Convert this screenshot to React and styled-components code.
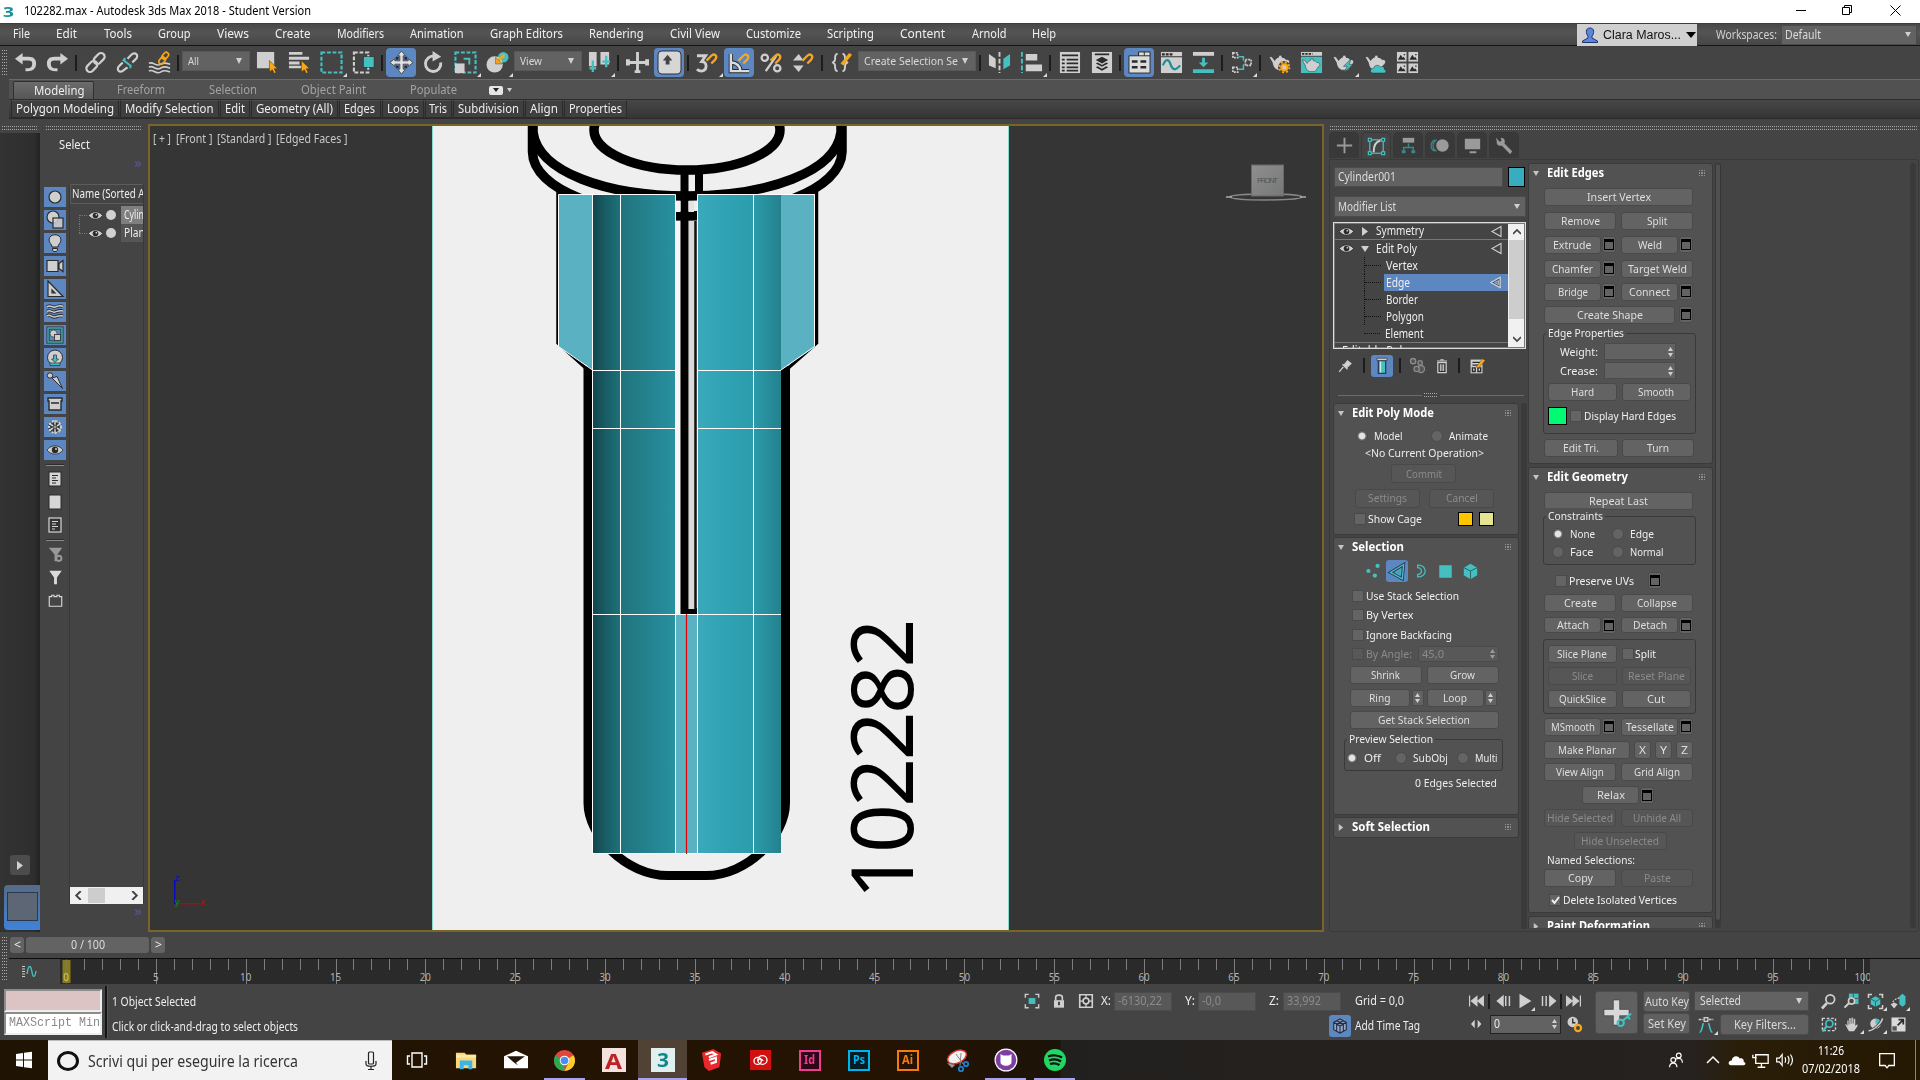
import React from "react";
import styled, { createGlobalStyle, css } from "styled-components";

const L = "#cfcfcf";
const K = "#2b2b2b";
const C = "#45c0c0";
const O = "#f7a71b";
const BLUE = "#5d87c1";
const UI = '"Noto Sans", "Open Sans", sans-serif';

const Global = createGlobalStyle`
  *{box-sizing:border-box}
  html,body{margin:0;padding:0;background:#444;overflow:hidden}
  body{font-family:${UI};font-size:12px;color:#eee}
  svg{display:block;flex:none}
`;

/* ---------- text ---------- */
const ctx = document.createElement("canvas").getContext("2d");
const TextBox = styled.span`
  display:block; flex:none; height:16px; line-height:16px; white-space:nowrap;
`;
const Ink = styled.span`
  display:block; width:max-content; transform-origin:0 50%;
  font-family:${(p) => p.$f}; font-size:${(p) => p.$s}px; font-weight:${(p) => (p.$b ? 700 : 400)};
  color:${(p) => p.$c};
`;
function T({ children, w, s = 12, c = "#ededed", b, f = UI, k = 0.86 }) {
  ctx.font = `${b ? 700 : 400} ${s}px ${f}`;
  const natural = ctx.measureText(children).width;
  const width = w || natural * k;
  return (
    <TextBox style={{ width }}>
      <Ink $s={s} $c={c} $b={b} $f={f} style={{ transform: `scaleX(${width / natural})` }}>{children}</Ink>
    </TextBox>
  );
}

/* ---------- icons ---------- */
const teapot = (
  <path d="M1 6 L4 6 L7 10 C8 8 9.500 7 11 6.500 L11.500 4.500 H14.500 V6.500 C17 7 18.500 8 19 9 C23 8 24 13 20 15 C19 17 18 19 16 20 H10 C7 19 5 16 4.500 12 Z" fill={L} stroke={K} strokeWidth=".6" />
);
const hook = <path d="M11 10 L16 5 C19 2 23 5 20 9 L16 13" fill="none" stroke={O} strokeWidth="2.4" />;
const cursor = <path d="M14 10 V22 L17 19.5 L19 23.5 L21 22.5 L19 18.5 H22.5Z" fill={O} stroke={K} strokeWidth=".5" />;
const people = (
  <g fill="none" stroke="#fff" strokeWidth="1.3"><circle cx="9" cy="12" r="2.6" /><circle cx="15" cy="7" r="2.6" /><path d="M5 20 C5 14 13 14 13 20 M12 11 C16 9 19 11 19 15" /></g>
);
const ICONS = {
  undo: <path d="M1 8 L9 2 V6 H15 C21 6 23 9 23 13 C23 18 20 21 14 21 H12 V18 H14 C18 18 19 16 19 13 C19 11 18 10 15 10 H9 V14Z" fill={L} />,
  redo: <path d="M23 8 L15 2 V6 H9 C3 6 1 9 1 13 C1 18 4 21 10 21 H12 V18 H10 C6 18 5 16 5 13 C5 11 6 10 9 10 H15 V14Z" fill={L} />,
  link: <g fill="none" stroke={L} strokeWidth="2.3"><rect x="9.5" y="4" width="13" height="7.5" rx="3.7" transform="rotate(-45 16 8)" /><rect x="1.5" y="12.5" width="13" height="7.5" rx="3.7" transform="rotate(-45 8 16)" /></g>,
  unlink: <g fill="none" strokeWidth="2.3"><path d="M12 8 L16 4 C20 0 25 5 20 9 L17 12 M12 17 L8 20 C4 24 -1 19 4 15 L7 12" stroke={L} /><path d="M7 9 L16 16 M9 7 V10 M15 18 V15" stroke={C} strokeWidth="2" /></g>,
  bind: <g fill="none"><path d="M1 13 C5 10 8 17 13 14 S20 13 23 14 M1 17 C5 14 8 21 13 18 S20 17 23 18 M1 21 C5 18 8 25 13 22 S20 21 23 22" stroke={L} strokeWidth="1.7" /><g stroke={O} strokeWidth="1.700"><rect x="14" y="2.500" width="8" height="5" rx="2.500" transform="rotate(-50 18 5)" /><rect x="10.500" y="8" width="8" height="5" rx="2.500" transform="rotate(-50 14 10)" /></g></g>,
  select: <><rect x="1" y="1" width="18" height="17" fill={L} />{cursor}</>,
  byname: <><path d="M1 1H15V4H1Z M1 6H22V9H1Z M1 11H12V14H1Z M1 15.500H20V18H1Z" fill={L} />{cursor}</>,
  rectsel: <rect x="1.500" y="1.500" width="21" height="21" fill="none" stroke={C} strokeWidth="2.200" strokeDasharray="4 1.800" />,
  crossing: <><rect x="2" y="1.500" width="15" height="21" fill="none" stroke={L} strokeWidth="2.200" strokeDasharray="4 1.800" /><rect x="12" y="6" width="11" height="11" fill={C} stroke={K} strokeWidth=".6" /></>,
  move: <><path d="M12 0 L16 5 H13.700 V10.300 H19 V8 L24 12 L19 16 V13.700 H13.700 V19 H16 L12 24 L8 19 H10.300 V13.700 H5 V16 L0 12 L5 8 V10.300 H10.300 V5 H8Z" fill="#e0e0e0" stroke={K} strokeWidth=".7" /><path d="M6 6h3v3h-3z M15 6h3v3h-3z M6 15h3v3h-3z M15 15h3v3h-3z" fill={K} /></>,
  rotate: <><path d="M19.500 12 A8 8 0 1 1 13 5.500" fill="none" stroke={L} strokeWidth="3" /><path d="M11 0 L20 6 L11 11Z" fill={L} /></>,
  scale: <><rect x="1.500" y="1.500" width="21" height="21" fill="none" stroke={C} strokeWidth="2.200" strokeDasharray="4 1.800" /><rect x="1" y="13" width="10" height="10" fill={L} /><path d="M10 8 H16 V14" fill="none" stroke={C} strokeWidth="2" /></>,
  place: <><circle cx="18" cy="6.500" r="5.500" fill={C} /><circle cx="9" cy="14" r="8.500" fill={L} /><path d="M19 4 L13 10" stroke={O} strokeWidth="3" /><path d="M10 6.500 V13.500 H17Z" fill={O} stroke={K} strokeWidth=".4" /></>,
  pivot: <><path d="M1 1H9V16H1Z M13 1H22V14H13Z" fill={L} /><path d="M5 10V22M1.500 18H8.500 M19 5V17M15 11H23" stroke={C} strokeWidth="2.400" /></>,
  manip: <path d="M10.500 1H13.500V10.500H20V8.500H24V15H20V13.500H13.500V20H15V23H9V20H10.500V13.500H4V15H0V8.500H4V10.500H10.500Z" fill={L} />,
  kbd: <><rect x="0" y="0" width="24" height="24" rx="4" fill="#d6d6d6" stroke={K} /><path d="M10 4 L15 10 H12V14H8V10H5Z" fill="#444" /></>,
  snap3: <><path d="M1 5 H10 L6 11 C12 11 12 20 6 21 C3 21 2 20 1 19" fill="none" stroke={L} strokeWidth="3" />{hook}</>,
  angle: <><path d="M3 3V21H22 M3 12 C9 12 13 16 13 21" fill="none" stroke={K} strokeWidth="4.500" /><path d="M3 3V21H22 M3 12 C9 12 13 16 13 21" fill="none" stroke="#dcdcdc" strokeWidth="2.600" />{hook}</>,
  pct: <><g fill="none" stroke={L} strokeWidth="2.400"><circle cx="5" cy="7" r="3.300" /><circle cx="18" cy="18" r="3.300" /><path d="M17 5 L6 21" /></g>{hook}</>,
  spin: <><path d="M7 3 L12 10H1Z M7 22 L12 15H1Z" fill={L} />{hook}</>,
  named: <><path d="M8 3 C4 3 6 8 5 10 L3 12 L5 14 C6 16 4 21 8 21 M13 3 C17 3 15 8 16 10 L18 12 L16 14 C15 16 17 21 13 21" fill="none" stroke={L} strokeWidth="2" /><path d="M11 13 L20 2 L23 4 L14 15Z" fill={O} /></>,
  mirror: <><path d="M1 3 L8 8 V18 L1 15Z" fill={L} /><path d="M23 3 L16 8 V19 L23 15Z" fill={C} /><path d="M12 1V23" stroke={L} strokeWidth="2" strokeDasharray="5 2" /></>,
  align: <><path d="M2 1V23" stroke={C} strokeWidth="2" strokeDasharray="5 2" /><path d="M6 3H18V10H6Z M6 14H23V21H6Z" fill={L} /></>,
  list: <><path d="M2 1H23V23H2Z" fill={L} /><path d="M4 4.500H21 M4 9H7M9 9H21 M4 13H7M9 13H21 M4 17H7M9 17H21 M4 20.500H7M9 20.500H21" stroke={K} strokeWidth="1.800" /></>,
  layers: <><path d="M2 1H23V23H2Z" fill={L} /><path d="M5 3.500H20" stroke={K} strokeWidth="1.800" /><path d="M12.500 6L19 9.500L12.500 13L6 9.500Z M6 13L12.500 16.500L19 13L17 12L12.500 14.500L8 12Z M6 17L12.500 20.500L19 17L17 16L12.500 18.500L8 16Z" fill={K} /></>,
  ribbon: <><path d="M1 5H11V1H23V23H1Z" fill="#dcdcdc" stroke={K} /><path d="M11 1V5H23M17 1V5" fill="none" stroke={K} /><path d="M4 11H10M13 11H19M4 17H10M13 17H19" stroke={K} strokeWidth="2.600" /></>,
  curve: <><path d="M1 1H23V23H1Z" fill={L} /><path d="M2 3.500H13" stroke={K} strokeWidth="2.500" strokeDasharray="3 1" /><path d="M1 6H23" stroke={K} /><path d="M3 15 C6 8 9 8 11 14 S16 21 21 15" fill="none" stroke="#238f94" strokeWidth="2.400" /></>,
  dope: <><path d="M1 1H23V5H1Z" fill={L} /><path d="M10.500 7H13.500V12H17L12 17L7 12H10.500Z M1 19H23V23H1Z" fill={C} /></>,
  schematic: <><g fill="#444" stroke={L} strokeWidth="1.800" strokeDasharray="2 1"><rect x="3" y="2" width="5" height="5" /><rect x="3" y="17" width="5" height="5" /><rect x="16" y="9" width="6" height="6" /></g><path d="M9 6H14V10M9 19H14V14" fill="none" stroke={C} strokeWidth="1.600" /></>,
  rsetup: <>{teapot}<circle cx="17" cy="17" r="6.500" fill="#444" /><circle cx="17" cy="17" r="3.200" fill={L} stroke={O} strokeWidth="2.200" /><circle cx="17" cy="17" r="5.300" fill="none" stroke={O} strokeWidth="2" strokeDasharray="2.100 2.060" /></>,
  rwindow: <><path d="M1 1H23V5H1Z" fill={L} /><path d="M2 3H13" stroke={K} strokeWidth="2" strokeDasharray="2.500 1" /><path d="M1 6H23V23H1Z" fill={C} /><g transform="translate(1.500 4.500) scale(.85)">{teapot}</g></>,
  rbolt: <>{teapot}<path d="M20 8 L12 16 H16 L12 23 L22 14 H18Z" fill={C} stroke={K} strokeWidth=".5" /></>,
  rcloud: <>{teapot}<path d="M9 23 C6 23 6 18 10 18 C11 14 16 14 17 17 C19 15 22 17 21 19 C24 20 23 23 21 23Z" fill={C} stroke={K} strokeWidth=".5" /></>,
  rgrid: <g fill={L}>{[[1, 1], [13, 1], [1, 13], [13, 13]].map(([x, y]) => <g key={x + "-" + y} transform={`translate(${x} ${y})`}><rect width="10" height="10" /><path d="M1 8 L4 3 L6 6 L7 5 L9 8Z M7 2h1.500v1.500h-1.500z" fill={K} /></g>)}</g>,
  /* explorer */
  geo: <circle cx="12" cy="12" r="6" fill={L} stroke={K} strokeWidth="1.200" />,
  shape: <><circle cx="10" cy="9" r="6" fill={L} stroke={K} strokeWidth="1.200" /><rect x="10" y="10" width="10" height="10" fill={L} fillOpacity=".85" stroke={K} strokeWidth="1.200" /></>,
  light: <path d="M9 16 C9 13 6 12 6 9 C6 2 18 2 18 9 C18 12 15 13 15 16Z M9.500 17.500H14.500V19L13.500 20.500H10.500L9.500 19Z" fill={L} stroke={K} />,
  camera: <path d="M4 6.500H15V17.500H4Z M16 9.500L20 6.500V17.500L16 14.500Z" fill={L} stroke={K} strokeWidth="1.200" />,
  helper: <path d="M5 4 L20 19.500 H5Z M9 13V16H12Z" fillRule="evenodd" fill={L} stroke={K} strokeWidth="1.200" />,
  wave: <g fill="none"><path d="M4 7 C7 4 9 8 12 7 S17 5 20 6.500 M4 11.500 C7 9 9 13 12 12 S17 10 20 11 M4 16 C7 13 9 18 12 17 S17 15 20 16" stroke={K} strokeWidth="3.200" /><path d="M4 7 C7 4 9 8 12 7 S17 5 20 6.500 M4 11.500 C7 9 9 13 12 12 S17 10 20 11 M4 16 C7 13 9 18 12 17 S17 15 20 16" stroke={L} strokeWidth="1.500" /></g>,
  group: <><rect x="5" y="5" width="14" height="14" fill={BLUE} stroke={K} strokeWidth="3" /><rect x="5" y="5" width="14" height="14" fill="none" stroke={C} strokeWidth="1.300" /><circle cx="10.500" cy="10.500" r="3.500" fill={L} stroke={K} strokeWidth=".6" /><rect x="11.500" y="11.500" width="6" height="6" fill={L} stroke={K} strokeWidth=".8" /></>,
  xref: <><circle cx="12" cy="11.500" r="7.500" fill={L} stroke={K} /><path d="M10.500 9H13.500V13H15.500L12 16.500L8.500 13H10.500Z M7 17H17V19.500H7Z" fill={C} stroke={K} strokeWidth=".7" /></>,
  bone: <><path d="M9 9 L14 7.500 L19.500 19.500Z" fill={L} stroke={K} /><circle cx="7" cy="6.500" r="2.700" fill={L} stroke={K} /></>,
  box: <path d="M5 6H19V9H18V18H6V9H5Z M8 11H16" fill={L} stroke={K} strokeWidth="1.400" />,
  frozen: <g stroke={K} fill="none"><path d="M12 5V19M6 8.500L18 15.500M6 15.500L18 8.500" strokeWidth="3.800" /><path d="M12 5V19M6 8.500L18 15.500M6 15.500L18 8.500" stroke={L} strokeWidth="1.600" /><circle cx="12" cy="12" r="6" stroke={L} strokeDasharray="2 1.500" strokeWidth="2" /><circle cx="12" cy="12" r="2" fill="#999" stroke={K} strokeWidth=".8" /></g>,
  eye: <><path d="M4 12 C8 6.500 16 6.500 20 12 C16 17.500 8 17.500 4 12Z" fill={L} stroke={K} strokeWidth=".8" /><circle cx="12" cy="12" r="3.200" fill={K} /><circle cx="13" cy="11" r="1" fill={L} /></>,
  doc1: <><rect x="6" y="5" width="12" height="14" fill="#d6d6d6" stroke={K} /><path d="M9 8.500H15M9 11H13M9 13.500H15M9 16H13" stroke={K} /></>,
  doc2: <rect x="6" y="5" width="12" height="14" fill="#d6d6d6" stroke={K} />,
  doc3: <><rect x="6" y="5" width="12" height="14" fill="#333" stroke="#d6d6d6" strokeWidth="1.200" /><path d="M9 8.500H15M9 11H13M9 13.500H15M9 16H12" stroke="#d6d6d6" /></>,
  filt1: <><path d="M5 5H19L14 12V19H11V12Z" fill="#999" /><circle cx="15.500" cy="16" r="2.700" fill="#444" stroke="#999" strokeWidth="2" /></>,
  filt2: <path d="M5.500 5H18.500L13.500 12V19H10.500V12Z" fill="#dadada" />,
  brick: <path d="M5.500 18V8H8V6.500H10.500V8H13.500V6.500H16V8H18.500V18Z" fill="none" stroke="#d6d6d6" strokeWidth="1.200" />,
  /* command panel */
  plus: <path d="M12 4V20M4 12H20" stroke="#9a9a9a" strokeWidth="2" />,
  modify: <><rect x="5" y="5" width="14" height="14" fill="none" stroke={C} strokeWidth="1.300" /><g fill="#333" stroke={C} strokeWidth="1.300"><rect x="3.500" y="3.500" width="3" height="3" /><rect x="17.500" y="3.500" width="3" height="3" /><rect x="3.500" y="17.500" width="3" height="3" /><rect x="17.500" y="17.500" width="3" height="3" /></g><path d="M9 18 C9 11 11 7 16 6" fill="none" stroke={L} strokeWidth="2" /></>,
  hier: <><path d="M6 4H18V9H6Z" fill="#9a9a9a" /><path d="M12 10V14M7 17V14H17V17" fill="none" stroke="#38898b" strokeWidth="1.500" /><path d="M5 17H9V20H5Z M15 17H19V20H15Z" fill="#38898b" /></>,
  motion: <><path d="M8 6 C3 9 3 16 8 18 M6 6 C1 9 1 16 6 18" fill="none" stroke="#38898b" strokeWidth="1.300" /><circle cx="14" cy="12" r="6.500" fill="#9a9a9a" /></>,
  display: <path d="M4 5H20V16H4Z M9 18H16V20H9Z" fill="#9a9a9a" />,
  util: <path d="M3 4 L7 8 L9 7 L8 4 C12 4 13 7 12 10 L20 18 L18 21 L9 12 C6 13 3 10 4 8Z" fill="#9a9a9a" />,
  pin: <path d="M5 19 L10 13 M9 10 L15 16 M11 11 L15 6 L19 9 L14 14Z" stroke={L} fill={L} strokeWidth="1.600" />,
  tube: <><path d="M8 6H16V20H8Z" fill={C} stroke="#2d3c50" strokeWidth="1.400" /><path d="M10.500 7V19" stroke="#d6efef" strokeWidth="1.200" /><path d="M6.500 3.500H17.500V6H6.500Z" fill={L} stroke="#2d3c50" strokeWidth=".8" /></>,
  unique: <g fill="#555" stroke="#8b8b8b" strokeWidth="1.500"><circle cx="7" cy="7" r="3" /><circle cx="15" cy="9" r="2.500" /><circle cx="16" cy="16" r="4" /><circle cx="11" cy="16" r="3" /></g>,
  trash: <><path d="M7 8H17V20H7Z" fill={K} stroke={L} strokeWidth="1.500" /><path d="M6 6H18M10 4.500H14M10 10V18M12 10V18M14 10V18" stroke={L} strokeWidth="1.300" /></>,
  config: <><path d="M5 5H18V20H5Z" fill={L} /><path d="M7 8H16M7 11H16M7 14h3v4h-3z M13 14h3v4h-3z" fill="none" stroke={K} strokeWidth="1.500" /><path d="M11 13 L18 4 L21 6 L14 14Z" fill={O} stroke={K} strokeWidth=".4" /></>,
  svert: <g fill={C}><circle cx="7" cy="12" r="2.300" /><circle cx="17" cy="6.500" r="2.300" /><circle cx="14" cy="17" r="2.300" /></g>,
  sedge: <g fill="none"><path d="M19 4 L4 13 L17.500 20.500Z" stroke="#24324a" strokeWidth="3.400" /><path d="M19 4 L4 13 L17.500 20.500Z" stroke={C} strokeWidth="1.600" /><path d="M15.500 9.800 L10 13 L15 15.800Z" stroke={C} strokeWidth="1" /></g>,
  sborder: <path d="M8 5 C20 4 20 20 8 19 V16 C15 16 13 8 8 8Z" fill="none" stroke={C} strokeWidth="1.500" />,
  spoly: <rect x="5.500" y="5.500" width="13" height="13" fill={C} />,
  selem: <><path d="M12 4 L19 8 V16 L12 20 L5 16 V8Z" fill={C} /><path d="M5 8 L12 11.500 L19 8 M12 11.500V20" fill="none" stroke="#2b5f60" /></>,
  /* status */
  isolate: <><path d="M4 8V4H8M16 4H20V8M20 16V20H16M8 20H4V16" fill="none" stroke={L} strokeWidth="1.700" /><rect x="8" y="8.500" width="8" height="7" fill={C} /></>,
  lock: <><path d="M8 11V7.500C8 4 16 4 16 7.500V11" fill="none" stroke={L} strokeWidth="2" /><path d="M6 11H18V20H6Z" fill={L} /><path d="M12 13V17" stroke={K} strokeWidth="2" /></>,
  absol: <><path d="M4.500 4.500H19.500V19.500H4.500Z" fill="#333" stroke={L} strokeWidth="2" /><path d="M12 4V20M4 12H20" stroke={L} strokeWidth="1.500" /><circle cx="12" cy="12" r="3.500" fill="#333" stroke={L} strokeWidth="2" /></>,
  cube: <><path d="M12 3.500 L19.500 7.500 V16.500 L12 20.500 L4.500 16.500 V7.500Z" fill="#8fa6c8" /><path d="M12 3.500 L19.500 7.500 V16.500 L12 20.500 L4.500 16.500 V7.500Z M4.500 7.500 L12 12 L19.500 7.500 M12 12V20.500 M8 5.500 L16 10 V18 M16 5.500 L8 10V18" fill="none" stroke="#222d3d" strokeWidth="1.300" /></>,
  start: <path d="M5 6V18M13 7V17L7 12Z M20 7V17L14 12Z" fill={L} stroke={L} strokeWidth="1.300" />,
  end: <path d="M19 6V18M11 7V17L17 12Z M4 7V17L10 12Z" fill={L} stroke={L} strokeWidth="1.300" />,
  prev: <path d="M12 7V17L6 12Z M15 6.500V17.500M19 6.500V17.500" fill={L} stroke={L} strokeWidth="1.600" />,
  next: <path d="M14 7V17L20 12Z M6 6.500V17.500M10 6.500V17.500" fill={L} stroke={L} strokeWidth="1.600" />,
  play: <path d="M6 4 L19 12 L6 20Z" fill={L} />,
  keymode: <path d="M10.500 7V17L6 12Z M14 7V17L18.500 12Z" fill={L} />,
  timecfg: <><circle cx="10" cy="9" r="6" fill={L} /><path d="M10 5V10H13" fill="none" stroke={K} strokeWidth="1.500" /><circle cx="16" cy="16" r="3.500" fill="#444" stroke={O} strokeWidth="2.600" /></>,
  bigkey: <><path d="M9 0H15V9H24V15H15V24H9V15H0V9H9Z" fill="#d8d8d8" stroke={K} strokeWidth=".5" /><g fill="none" stroke={C} strokeWidth="2"><circle cx="16" cy="22" r="3" /><path d="M18 20 L26 13 M22.500 16 L25 18.500" /></g></>,
  tangent: <><path d="M4 6H9M15 6H20" stroke={L} strokeWidth="1.500" strokeDasharray="3 1" /><rect x="10" y="4" width="4" height="4" fill="none" stroke={L} strokeWidth="1.500" /><path d="M5 20C7 20 8 15 9 10 M19 20C17 20 16 15 15 10" fill="none" stroke={C} strokeWidth="1.800" /></>,
  zoom: <><circle cx="14" cy="9.500" r="5" fill="none" stroke={L} strokeWidth="2" /><path d="M10 14L4.500 20" stroke={L} strokeWidth="3" /></>,
  zoomall: <><path d="M9 3H20V15H9Z" fill={C} /><path d="M14 3V15M9 8.500H20" stroke="#444" /><circle cx="12" cy="11.500" r="3.500" fill="#444" stroke={L} strokeWidth="1.800" /><path d="M9 14L4 19" stroke={L} strokeWidth="2.400" /></>,
  extents: <><path d="M4 8V4H8M16 4H20V8M20 16V20H16M8 20H4V16" fill="none" stroke={L} strokeWidth="1.800" /><path d="M12 6L17.500 9V15L12 18L6.500 15V9Z" fill={C} /><path d="M6.500 9L12 12L17.500 9M12 12V18" stroke="#2b5f60" fill="none" /></>,
  extall: <><path d="M13 6L16.500 3L20 6V15L16.500 18L13 15Z" fill={C} /><path d="M13 8C8 9 6 11 5 14" fill="none" stroke={L} strokeWidth="1.500" strokeDasharray="2 1.500" /><path d="M3 15L7 13L11 15L7 20Z" fill={L} /></>,
  region: <><rect x="5" y="5" width="15" height="14" fill="none" stroke={L} strokeWidth="1.600" strokeDasharray="3 2" /><circle cx="13" cy="11" r="4" fill="#444" stroke={C} strokeWidth="2" /><path d="M10 14L5 20" stroke={C} strokeWidth="2.400" /></>,
  hand: <path d="M7 13 V7H9V12 V4.500H11.500V11 V4H14V11 V5.500H16.500V13 L19 11V14L15 20H9L4.500 12L6 11Z" fill={L} stroke={K} strokeWidth=".4" />,
  orbit: <><circle cx="12" cy="11" r="6" fill={L} /><path d="M12 5A6 6 0 0 1 18 11L12 11Z" fill={C} /><path d="M4 19 C8 20 19 11 20 5" fill="none" stroke="#444" strokeWidth="3.500" /><path d="M4 19 C8 20 19 11 20 5" fill="none" stroke={L} strokeWidth="1.700" /></>,
  maxi: <><path d="M4 4H20V20H4Z" fill="#dadada" /><path d="M11 13L17 7M12 6.500H17.500V12" stroke={K} strokeWidth="2" fill="none" /><path d="M5 14H10V19H5Z" fill="#555" /></>,
  /* task bar */
  win: <path d="M4 6L11 5V11.500H4Z M12 4.800L20 3.700V11.500H12Z M4 12.500H11V19L4 18Z M12 12.500H20V20.300L12 19.200Z" fill="#fff" />,
  mic: <><rect x="9.500" y="3" width="5" height="12" rx="1" fill="none" stroke="#222" strokeWidth="1.200" /><path d="M7 12V15C7 18 17 18 17 15V12M12 17.500V20M9 20.500H15" fill="none" stroke="#222" strokeWidth="1.200" /></>,
  taskview: <path d="M7 5H17V19H7Z M5 8H2.500V16H5M19 8H21.500V16H19" fill="none" stroke="#fff" strokeWidth="1.400" />,
  folder: <><path d="M1 4H10L12 6H22V20H1Z" fill="#f9d877" /><path d="M1 6H22V9H1Z" fill="#fce9a7" /><path d="M5 12H18V21H14V17H9V21H5Z" fill="#3cb4ea" /></>,
  mail: <><path d="M0 8L12 2L24 8V21H0Z" fill="#fff" /><path d="M3 8H21L12 15L14 18L9 14L4 9Z" fill="#22160a" /></>,
  chrome: <><circle cx="12" cy="12" r="11" fill="#e0473a" /><path d="M12 12 L2.500 6.500 A11 11 0 0 0 12 23Z" fill="#2fa650" /><path d="M12 12 L21.500 6.500 A11 11 0 0 1 12 23 L17 13Z" fill="#fccd2c" /><circle cx="12" cy="12" r="5" fill="#fff" /><circle cx="12" cy="12" r="4" fill="#4b8bf4" /></>,
  people,
  up: <path d="M6 15L12 9L18 15" fill="none" stroke="#fff" strokeWidth="1.500" />,
  cloud: <path d="M5 18C1 18 1 12 6 12C6 6 14 4.500 16 9.500C20 8 22 12 21 14C24 14 24 18 21 18Z" fill="#fff" />,
  net: <path d="M7 6H20V15H7Z M4 6V9H8M13 15V19M9 19H17" fill="none" stroke="#fff" strokeWidth="1.400" />,
  vol: <path d="M4 10H7L10 6V18L7 14H4Z M13 9C14 11 14 13 13 15M16 7.500C18 10 18 14 16 16.500M19 6C22 10 22 14 19 18" fill="none" stroke="#fff" strokeWidth="1.300" />,
  notif: <path d="M4 5H20V18H14L12 20.500L10 18H4Z" fill="none" stroke="#fff" strokeWidth="1.400" />,
  sketch: <><path d="M1 4L14 0L23 5L21 20L9 24L4 20Z" fill="#e8282b" /><path d="M5 6L13 3.500L17 6L9 9M9 12L17 9.500V14L11 16" fill="none" stroke="#fff" strokeWidth="2.400" /></>,
  cc: <><path d="M1 1H23V23H1Z" fill="#d40f10" /><g fill="none" stroke="#fff" strokeWidth="1.400"><circle cx="9" cy="13" r="3.800" /><circle cx="14" cy="12" r="4.800" /><path d="M9 13C11 9 13 11 15 13" /></g></>,
  snip: <><ellipse cx="12" cy="9" rx="10" ry="6" fill="#f2f2f2" stroke="#d33" strokeWidth="1.500" transform="rotate(-25 12 9)" /><path d="M2 15L10 17L7 20Z" fill="#999" /><g fill="none" stroke="#1c7fd0" strokeWidth="1.800"><circle cx="21" cy="16" r="2.200" /><circle cx="16" cy="21" r="2.200" /><path d="M18 16L11 6M15 18L16 5" stroke="#888" strokeWidth="1" /></g></>,
  github: <><ellipse cx="12" cy="12" rx="11.500" ry="11.500" fill="#fff" /><circle cx="12" cy="12" r="10.300" fill="#7d3fa3" /><path d="M6.500 6L9 7.500H15L17.500 6V14C17.500 19 6.500 19 6.500 14Z" fill="#fff" /></>,
  spotify: <><circle cx="12" cy="12" r="11" fill="#1fd761" /><path d="M5 8.500C10 6.500 16 7.500 19 9.500M6 12.500C10 11 15 11.500 18 13.500M7 16C10 15 14 15.500 16.500 17" fill="none" stroke="#111" strokeWidth="2.200" /></>,
};
function Ic({ n, w = 24, h }) {
  return <svg width={w} height={h || w} viewBox="0 0 24 24" preserveAspectRatio="none" overflow="visible">{ICONS[n]}</svg>;
}
const Tri = ({ d = "down", c = "#d0d0d0", w = 8, h = 6 }) => (
  <svg width={w} height={h} viewBox="0 0 8 6" preserveAspectRatio="none">
    <path d={{ down: "M0 0H8L4 6Z", right: "M1 0L7 3L1 6Z", left: "M7 0L1 3L7 6Z", up: "M0 6H8L4 0Z" }[d]} fill={c} />
  </svg>
);

/* ---------- generic parts ---------- */
const Row = styled.div`
  display:flex; flex:none; align-items:${(p) => p.$a || "center"}; gap:${(p) => p.$g || 0}px;
  height:${(p) => (p.$h ? p.$h + "px" : "auto")}; margin-top:${(p) => p.$t || 0}px; padding-left:${(p) => p.$l || 0}px;
`;
const Gap = styled.div`flex:none; width:${(p) => p.$w || 0}px; height:${(p) => p.$h || 0}px;`;
const Grip = styled.div`
  flex:none; background-image:radial-gradient(circle at .5px .5px,#aaa .6px,transparent .8px); background-size:2px 3px;
  width:${(p) => (p.$v ? 5 : p.$w)}px; height:${(p) => (p.$v ? p.$v : 4)}px;
`;
const Btn = styled.button`
  flex:none; display:flex; align-items:center; justify-content:center; padding:0; margin:0; overflow:hidden;
  width:${(p) => p.$w}px; height:${(p) => p.$h || 18}px; border:1px solid #494949; border-radius:3px;
  background:${(p) => (p.$off ? "#565656" : "#636363")};
`;
const Field = styled.div`
  flex:none; display:flex; align-items:center; justify-content:space-between; overflow:hidden;
  width:${(p) => p.$w}px; height:${(p) => p.$h}px; padding:0 ${(p) => p.$pr ?? 5}px 0 ${(p) => p.$pl ?? 3}px;
  background:${(p) => p.$bg || "#626262"}; border:1px solid ${(p) => p.$bd || "#4b4b4b"};
`;
const Swatch = styled.div`flex:none; width:${(p) => p.$w}px; height:${(p) => p.$h}px; background:${(p) => p.$c}; border:1px solid #000;`;
const OFF = "#8b8b8b";
const B = ({ w, h, off, tw, children }) => <Btn $w={w} $h={h} $off={off}><T s={11.5} w={tw} c={off ? OFF : "#dedede"}>{children}</T></Btn>;
const SpinBox = styled.span`display:flex; flex-direction:column; gap:2px;`;
const Spin = ({ c }) => <SpinBox><Tri d="up" w={5} h={4} c={c} /><Tri w={5} h={4} c={c} /></SpinBox>;

/* ---------- top bars ---------- */
const Shell = styled.div`width:1920px; height:1080px; display:flex; flex-direction:column; background:#444; overflow:hidden;`;
const TitleBar = styled.div`height:23px; flex:none; display:flex; align-items:center; padding:0 19px 1px 3px; background:#fff;`;
const Spacer = styled.div`flex:1;`;
const WinBtn = styled.div`width:46px; display:flex; justify-content:center; margin-top:-2px; &:last-child{width:12px; margin-left:19px;}`;
const MenuBar = styled.div`
  height:23px; flex:none; display:flex; align-items:center; padding:0 3px 0 13px; border-top:1px solid #3c3c3c; border-bottom:1px solid #151515;
  background:linear-gradient(#484848,#545454 40%,#464646);
`;
const MenuList = styled.div`display:flex; gap:26.250px; flex:none; margin-top:-1px;`;
const User = styled.div`height:22px; width:120px; display:flex; align-items:center; gap:5px; padding:0 4px 0 5px; background:#d0d0d0; margin-right:19.500px;`;
const Toolbar = styled.div`height:33px; flex:none; display:flex; align-items:center; padding:0 0 0 2px; background:#444;`;
const Cell = styled.div`
  flex:none; width:32px; height:29px; display:flex; align-items:center; justify-content:center; position:relative;
  ${(p) => p.$on && css`background:${BLUE}; border-radius:4px; width:30px; margin:0 1px;`}
`;
const Fly = styled.i`
  position:absolute; right:0; bottom:0; border:solid transparent; border-width:4px 0 0 4px; width:0; height:0;
  border-bottom:4px solid #ddd; border-top:0;
`;
const Sep = styled.div`flex:none; width:2px; height:16px; margin:0 2px; background:#1c1c1c;`;
const Drop = styled.div`
  flex:none; display:flex; align-items:center; justify-content:space-between; width:${(p) => p.$w}px; height:20px; margin:-4px 1px 0 1px;
  padding:0 7px 0 5px; background:#626262; border:1px solid #585858;
`;
const RibbonTabs = styled.div`height:21px; flex:none; display:flex; align-items:flex-end; background:#515151; border-top:1px solid #6a6a6a; border-bottom:1px solid #2c2c2c; margin-left:9px; padding-left:4px;`;
const RTab = styled.div`
  height:18px; display:flex; align-items:center; padding:0; margin-bottom:0;
  ${(p) => p.$on && css`width:81px; justify-content:center; padding-left:12px; background:linear-gradient(#6c6c6c,#565656); border:1px solid #303030; border-bottom:0; border-radius:2px 2px 0 0;`}
`;
const Pill = styled.div`width:14px; height:9px; border-radius:2px; background:#e6e6e6; display:flex; align-items:center; justify-content:center;`;
const RibbonRow = styled.div`height:19px; flex:none; display:flex; align-items:center; gap:1px; margin-left:9px; padding-left:2px; background:linear-gradient(#474747,#353535); border-bottom:1px solid #2a2a2a;`;
const RBtn = styled.div`flex:none; width:${(p) => p.$w}px; height:18px; display:flex; align-items:center; justify-content:center; background:#3f3f3f; border:1px solid #2b2b2b; border-top-color:#4f4f4f;`;

const MENUS = [["File", 17], ["Edit", 21], ["Tools", 28], ["Group", 32.5], ["Views", 32], ["Create", 35.5], ["Modifiers", 47], ["Animation", 53.5], ["Graph Editors", 73], ["Rendering", 54.5], ["Civil View", 50], ["Customize", 55], ["Scripting", 47], ["Content", 45], ["Arnold", 34.5], ["Help", 24]];
const TOOLS = ["undo", "redo", "|", "link", "unlink", "bind", "|", { t: "All", w: 68, tw: 11 }, "select", "byname", "rectsel^", "crossing", "|", "move*", "rotate", "scale^", "place^", { t: "View", w: 68, tw: 22 }, "pivot^", "|", "manip", "kbd*", "|", "snap3^", "angle*", "pct", "spin", "|", "named", { t: "Create Selection Se", w: 118, tw: 94 }, "|", "mirror", "align^", "|", "list", "layers", "|", "ribbon*", "curve", "dope", "|", "schematic^", "|", "rsetup", "rwindow", "rbolt^", "rcloud", "rgrid"];
const RPANELS = [["Polygon Modeling", 108, 98], ["Modify Selection", 99, 88.5], ["Edit", 30, 20], ["Geometry (All)", 87, 77], ["Edges", 41.5, 31], ["Loops", 42, 32], ["Tris", 27, 18], ["Subdivision", 71, 61], ["Align", 38, 28], ["Properties", 63, 53]];

function Tool({ n }) {
  if (n === "|") return <Sep />;
  if (n.t) return <Drop $w={n.w}><T w={n.tw} s={11.5} c="#d8d8d8">{n.t}</T><Tri w={6} h={6} /></Drop>;
  const on = n.endsWith("*"), fly = n.endsWith("^");
  return <Cell $on={on}><Ic n={n.replace(/[*^]/, "")} w={23} />{fly && <Fly />}</Cell>;
}

/* ---------- left dock ---------- */
const Main = styled.div`height:813px; flex:none; display:flex;`;
const Strip = styled.div`width:40px; flex:none; display:flex; flex-direction:column; padding-top:7px;`;
const StripDark = styled.div`flex:1; margin-top:3px; background:linear-gradient(90deg,#333,#2e2e2e 85%,#222); display:flex; flex-direction:column; justify-content:flex-end;`;
const PlayBtn = styled.div`width:20px; height:20px; margin:0 0 10px 10px; border-radius:3px; background:#4c4c4c; display:flex; align-items:center; justify-content:center;`;
const Preset = styled.div`height:45px; margin:0 0 2px 4px; padding:7px 2px 9px 3px; border-radius:4px 0 0 4px; background:linear-gradient(#566b85,#3e82da);`;
const PresetIn = styled.div`height:100%; border:1px solid #29384c; background:#5c6674;`;
const Explorer = styled.div`width:108px; flex:none; display:flex; flex-direction:column; padding:7px 0 0 4px;`;
const More = styled.div`height:16px; color:#55559a; font-size:15px; line-height:14px; text-align:right; padding-right:6px;`;
const ExBody = styled.div`display:flex; height:720px; align-items:stretch; gap:3px;`;
const IconCol = styled.div`width:22px; display:flex; flex-direction:column; gap:3px; padding-top:3px;`;
const ExBtn = styled.div`width:22px; height:20px; display:flex; align-items:center; justify-content:center; background:${(p) => (p.$on ? BLUE : "transparent")};`;
const HLine = styled.div`width:18px; height:2px; margin:.5px 2px; border-top:1px solid #2d2d2d; border-bottom:1px solid #888;`;
const Tree = styled.div`width:75px; overflow:hidden; border-left:1px solid #383838; border-right:1px solid #383838; display:flex; flex-direction:column;`;
const TreeHead = styled.div`height:20px; flex:none; border:1px solid #5c5c5c; border-right:0; padding-left:1px; display:flex; align-items:center; overflow:hidden; margin-bottom:2px;`;
const TreeRow = styled.div`height:18px; flex:none; display:flex; align-items:center; padding-left:9px;`;
const TreeLine = styled.div`width:8px; height:18px; flex:none; margin-right:-2px; position:relative;
  &::before{content:"";position:absolute;left:0;right:0;top:9px;border-top:1px dotted #777}
  &::after{content:"";position:absolute;left:0;border-left:1px dotted #777;${(p) => (p.$last ? "top:0;height:9px" : "top:9px;height:9px")}}`;
const Dot = styled.div`width:10px; height:10px; border-radius:50%; background:#d0d0d0; margin:0 5px 0 0; flex:none;`;
const TreeName = styled.div`flex:1; height:18px; overflow:hidden; padding:1px 0 0 3px; background:${(p) => (p.$on ? "#7f7f7f" : "#555")};`;
const HScroll = styled.div`height:17px; flex:none; background:#f0f0f0; display:flex; align-items:center; padding:0 4px; gap:5px;`;
const HThumb = styled.div`width:17px; height:15px; background:#cdcdcd; margin-right:auto;`;

const EX = ["geo", "shape", "light", "camera", "helper", "wave", "group", "xref", "bone", "box", "frozen", "eye"];
const Chev = ({ d, c = "#444", s = 8 }) => (
  <svg width={s} height={s} viewBox="0 0 8 8"><path d={{ l: "M6 0L2 4L6 8", r: "M2 0L6 4L2 8", u: "M0 6L4 2L8 6", d: "M0 2L4 6L8 2" }[d]} fill="none" stroke={c} strokeWidth="1.700" /></svg>
);

function LeftDock() {
  return (
    <>
      <Strip>
        <Row $l={2}><Grip $w={35} /></Row>
        <StripDark>
          <PlayBtn><Tri d="right" w={8} h={9} /></PlayBtn>
          <Preset><PresetIn /></Preset>
        </StripDark>
      </Strip>
      <Explorer>
        <Row $l={2}><Grip $w={95} /></Row>
        <Row $l={15} $t={7} $h={16}><T w={31}>Select</T></Row>
        <Row $t={2}><Spacer /><More>»</More></Row>
        <Gap $h={13} />
        <ExBody>
          <IconCol>
            {EX.map((n) => <ExBtn key={n} $on><Ic n={n} w={24} /></ExBtn>)}
            <HLine />
            {["doc1", "doc2", "doc3"].map((n) => <ExBtn key={n}><Ic n={n} w={24} /></ExBtn>)}
            <HLine />
            {["filt1", "filt2", "brick"].map((n) => <ExBtn key={n}><Ic n={n} w={23} /></ExBtn>)}
          </IconCol>
          <Tree>
            <TreeHead><T w={82}>Name (Sorted Asc</T></TreeHead>
            <TreeRow><TreeLine /><Ic n="eye" w={21} /><Dot /><TreeName $on><T w={49}>Cylinder001</T></TreeName></TreeRow>
            <TreeRow><TreeLine $last /><Ic n="eye" w={21} /><Dot /><TreeName><T w={44}>Plane001</T></TreeName></TreeRow>
            <Spacer />
            <HScroll><Chev d="l" s={9} /><HThumb /><Chev d="r" s={9} /></HScroll>
          </Tree>
        </ExBody>
        <Row $t={-1}><Spacer /><More>»</More></Row>
      </Explorer>
    </>
  );
}

/* ---------- viewport ---------- */
const View = styled.div`width:1176px; height:808px; margin-top:5px; flex:none; border:2px solid #7a6428; background:#353535; position:relative;`;
const ViewLabels = styled.div`position:absolute; left:3px; top:5px; display:flex; gap:4.500px;`;
function Viewport() {
  return (
    <View>
      <svg width="1172" height="804" viewBox="150 126 1172 804">
        <defs>
          <linearGradient id="a"><stop offset="0" stopColor="#11454d" /><stop offset=".45" stopColor="#195c64" /><stop offset="1" stopColor="#1d717a" /></linearGradient>
          <linearGradient id="b"><stop offset="0" stopColor="#1f737d" /><stop offset="1" stopColor="#2891a0" /></linearGradient>
          <linearGradient id="c"><stop offset="0" stopColor="#3ba9bb" /><stop offset=".5" stopColor="#2fa2b3" /><stop offset="1" stopColor="#2c9cac" /></linearGradient>
          <linearGradient id="d"><stop offset="0" stopColor="#2b9bab" /><stop offset="1" stopColor="#24818d" /></linearGradient>
          <linearGradient id="cube" x2="1" y2="1"><stop offset="0" stopColor="#8f8f8f" /><stop offset="1" stopColor="#777" /></linearGradient>
        </defs>
        <rect x="432" y="126" width="577" height="804" fill="#efefef" />
        <path d="M432.500 126V930M1008.500 126V930" stroke="#86dcc8" />
        <g fill="none" stroke="#000">
          <g strokeWidth="9.500">
            <ellipse cx="687" cy="130" rx="93" ry="40" />
            <path d="M533 126V132C538 172 606 196 687 196S836 172 841 132V126" />
            <path d="M532.500 126V152C533 190 606 216 687 216S841 190 842 152V126" />
            <path d="M588 366V803C588 836 626 875.500 668 875.500H706C748 875.500 785.500 836 785.500 803V366" strokeWidth="9" />
          </g>
          <path d="M684.500 172V612H697" strokeWidth="8" />
          <path d="M699 172V196" strokeWidth="8" />
          <path d="M558 190V343L588 370M816.500 188V343L786 370" strokeWidth="3.500" />
        </g>
        <path d="M676 221H680.500V613H676Z" fill="#f6f6f6" />
        <path d="M688.500 221H695V609H688.500Z" fill="#d9d9d9" />
        <path d="M688.500 201H694V212H688.500Z" fill="#e4e4e4" />
        <path d="M676 201H680.500V212H676Z" fill="#f4f4f4" />
        <path d="M695.500 221V610" stroke="#111" strokeWidth="2.500" />
        <path d="M680.500 221V613M688.500 221V609" stroke="#777" />
        <path d="M559 195H593V370L559 347Z M815 195H781V370L815 347Z M676 615H698V853H676Z" fill="#59b1c1" />
        <rect x="593" y="195" width="27" height="658" fill="url(#a)" />
        <rect x="620" y="195" width="56" height="658" fill="url(#b)" />
        <rect x="698" y="195" width="55.500" height="658" fill="url(#c)" />
        <rect x="753.500" y="195" width="27.500" height="658" fill="url(#d)" />
        <path d="M558.500 346.500V194.500H675.500V853.500M592.500 194.500V853.500H781M620.500 194.500V853.500M697.500 853.500V194.500H814.500V346.500L781 370M558.500 346.500L592.500 370M753.500 194.500V853.500M592.500 370.500H675.500M697.500 370.500H781M592.500 428.500H675.500M697.500 428.500H781M592.500 614.500H781" fill="none" stroke="#fff" />
        <path d="M686.500 614V854" stroke="#dd0000" strokeWidth="1.200" />
        <text transform="translate(912.500 899.500) rotate(-90)" fontFamily="Noto Sans, sans-serif" fontSize="85.500" letterSpacing="-2.500" fill="#000">102282</text>
        <path d="M174.700 880V904" stroke="#0707c8" strokeWidth="1.300" />
        <path d="M179 903.700H203" stroke="#c00606" strokeWidth="1.300" />
        <g fontFamily="DejaVu Sans, sans-serif" fontSize="9"><text x="174.500" y="881" fill="#0d0db4">z</text><text x="200" y="905" fill="#b40d0d">x</text><text x="174.500" y="905" fill="#0f8d14">y</text></g>
        <ellipse cx="1266" cy="197" rx="36" ry="3" fill="none" stroke="#888" strokeWidth="1.300" />
        <path d="M1226 197H1232M1300 197H1306" stroke="#aaa" strokeWidth="1.500" />
        <rect x="1251.500" y="165" width="32" height="31" fill="url(#cube)" stroke="#686868" />
        <text x="1257" y="183" fontFamily="Liberation Sans, sans-serif" fontSize="8" textLength="21" fill="#555">FRONT</text>
      </svg>
      <ViewLabels>
        <T w={18} c="#c9c9c9">[ + ]</T><T w={36.5} c="#c9c9c9">[Front ]</T><T w={54.5} c="#c9c9c9">[Standard ]</T><T w={71.5} c="#c9c9c9">[Edged Faces ]</T>
      </ViewLabels>
    </View>
  );
}

/* ---------- command panel ---------- */
const Panel = styled.div`width:596px; padding:7px 1px 0 5px; flex:none; display:flex; flex-direction:column;`;
const Tabs = styled.div`display:flex; gap:2px; height:27px; flex:none; margin-top:2px;`;
const Tab = styled.div`width:30px; height:${(p) => (p.$on ? 28 : 26)}px; display:flex; align-items:center; justify-content:center; background:${(p) => (p.$on ? "#444" : "#393939")}; border:1px solid #383838; border-bottom:0; border-radius:5px 5px 0 0;`;
const PanelBody = styled.div`height:773px; flex:none; display:flex; border:1px solid #393939; border-radius:0 3px 3px 3px; padding:3px 2px 3px 3px;`;
const ColA = styled.div`width:194px; flex:none; display:flex; flex-direction:column; padding-top:4px;`;
const ColB = styled.div`width:185px; flex:none; margin-left:1px; display:flex; flex-direction:column; gap:3px; overflow:hidden;`;
const Roll = styled.div`
  width:${(p) => p.$w}px; height:${(p) => p.$h}px; flex:none; background:#525252; box-shadow:inset 0 0 0 1px #3a3a3a; border-radius:3px; overflow:hidden;
  display:flex; flex-direction:column;
`;
const RollHead = styled.div`height:20px; flex:none; display:flex; align-items:center; padding:0 8px 0 5px;`;
const Dots = styled.div`width:6px; height:6px;
  background:repeating-linear-gradient(90deg,#8d8d8d 0 1px,transparent 1px 2.500px); mask:repeating-linear-gradient(#000 0 1px,transparent 1px 2.500px);`;
const Head = ({ children, tw, open = true }) => (
  <RollHead><Tri d={open ? "down" : "right"} w={6} h={open ? 5 : 7} c="#c4c4c4" /><Gap $w={8} /><T b w={tw} c="#fff">{children}</T><Spacer /><Dots /></RollHead>
);
const Radio = styled.div`flex:none; width:12px; height:12px; border-radius:50%; background:${(p) => (p.$on ? "radial-gradient(#e4e4e4 0 2.800px,#666 4px)" : "#646464")}; border:1px solid #4b4b4b;`;
const CheckBox = styled.div`flex:none; width:12px; height:12px; background:${(p) => (p.$off ? "#585858" : "#646464")}; border:1px solid #4a4a4a; display:flex; align-items:center; justify-content:center;`;
const Opt = styled.button`flex:none; width:14px; height:17px; padding:0; margin:0; background:#636363; border:1px solid #4b4b4b; border-radius:3px; display:flex; align-items:center; justify-content:center;
  &::after{content:"";width:10px;height:11px;border:1px solid #000;border-top-width:3px;box-sizing:border-box;}`;
const Group = styled.fieldset`
  margin:${(p) => p.$t}px 0 0 ${(p) => p.$l}px; padding:0; width:${(p) => p.$w}px; height:${(p) => p.$h}px; flex:none; border:1px solid #393939; border-radius:3px; min-width:0;
  display:flex; flex-direction:column;
`;
const Legend = styled.div`height:16px; width:max-content; margin:-9px 0 0 2px; padding:0 2px; background:#525252; flex:none;`;
const Stack = styled.div`height:127px; margin:5px 0 0 0; width:193px; flex:none; display:flex; border:1px solid #ddd; outline:1px solid #777; outline-offset:-2px;`;
const StackList = styled.div`flex:1; height:125px; overflow:hidden; background:#444;`;
const StackRow = styled.div`height:17px; display:flex; align-items:center; border-bottom:${(p) => (p.$line ? "1px solid #777" : 0)}; border-top:${(p) => (p.$top ? "1px solid #777" : 0)};`;
const SubRow = styled.div`height:17px; margin-left:30px; display:flex; align-items:center; border-left:${(p) => (p.$last ? 0 : "1px dotted #111")}; &::before{content:"";width:16px;border-top:1px dotted #111;}`;
const SubName = styled.div`flex:1; height:17px; margin-left:3px; padding:0 6px 0 2px; display:flex; align-items:center; justify-content:space-between; background:${(p) => (p.$on ? BLUE : "transparent")};`;
const VScroll = styled.div`width:17px; background:#f1f1f1; display:flex; flex-direction:column; align-items:center; padding:5px 0; justify-content:space-between;`;
const VThumb = styled.div`width:15px; height:79px; background:#cdcdcd; margin-bottom:auto; margin-top:4px;`;
const ToolBtn = styled.div`width:22px; height:22px; border-radius:3px; background:${BLUE}; display:flex; align-items:center; justify-content:center; flex:none;`;
const VBar = styled.div`width:2px; height:15px; background:#1c1c1c; flex:none;`;
const Rule = styled.div`width:84px; height:1px; background:#6b6b6b;`;
const Rail = styled.div`width:${(p) => p.$w || 6}px; flex:none; background:#3a3a3a; border-radius:3px; margin-left:${(p) => p.$l || 0}px;`;
const Thumb = styled.div`width:6px; height:758px; background:#505050; border:1px solid #363636; border-radius:3px;`;

const EdgeMark = ({ on }) => (
  <svg width="13" height="13" viewBox="0 0 13 13"><path d="M11 1.500L2 6.500L11 11.500Z" fill="none" stroke="#cfcfcf" strokeWidth="1.100" />{on && <><path d="M11 1.500L2 6.500L11 11.500Z" fill="#38475f" stroke="#cfcfcf" strokeWidth="1.100" /><path d="M9.500 4.500L5.500 6.500L9.500 8.700Z" fill={BLUE} stroke="#cfcfcf" strokeWidth=".7" /></>}</svg>
);
const Chk = ({ children, tw, off, on }) => <><CheckBox $off={off}>{on && <svg width="9" height="9" viewBox="0 0 9 9"><path d="M1 4L3.500 7L8 1" fill="none" stroke="#eee" strokeWidth="2" /></svg>}</CheckBox><Gap $w={1.5} /><T w={tw} s={11.5} c={off ? OFF : "#f0f0f0"}>{children}</T></>;
const Pair = ({ t, a, b, aw, bw, off, offB, ao, bo, h = 18 }) => (
  <Row $t={t} $l={16} $h={h} $a="flex-start">
    <B w={ao ? 57 : 72} h={h} tw={aw} off={off}>{a}</B>{ao && <><Gap $w={1} /><Opt /></>}
    <Gap $w={5} />
    <B w={bo ? 57 : 72} h={h} tw={bw} off={off || offB}>{b}</B>{bo && <><Gap $w={1} /><Opt /></>}
  </Row>
);

function CommandPanel() {
  return (
    <Panel>
      <Row $l={1}><Grip $w={587} /></Row>
      <Tabs>{["plus", "modify", "hier", "motion", "display", "util"].map((n) => <Tab key={n} $on={n === "modify"}><Ic n={n} w={23} /></Tab>)}</Tabs>
      <PanelBody>
        <ColA>
          <Row $l={1}><Field $w={169} $h={20}><T w={58} s={12} c="#dcdcdc">Cylinder001</T></Field><Gap $w={5} /><Swatch $w={16.5} $h={20} $c="#38adbf" /></Row>
          <Row $l={1} $t={9}><Field $w={192} $h={21}><T w={58} s={12} c="#dcdcdc">Modifier List</T><Tri w={6} h={5} /></Field></Row>
          <Stack>
            <StackList>
              <StackRow $line><Gap $w={2} /><Ic n="eye" w={21} /><Gap $w={4} /><Tri d="right" w={8} h={9} /><Gap $w={7} /><T w={48}>Symmetry</T><Spacer /><EdgeMark /><Gap $w={5} /></StackRow>
              <StackRow><Gap $w={2} /><Ic n="eye" w={21} /><Gap $w={4} /><Tri w={8} h={6} /><Gap $w={7} /><T w={41}>Edit Poly</T><Spacer /><EdgeMark /><Gap $w={5} /></StackRow>
              {[["Vertex", 32], ["Edge", 24], ["Border", 32], ["Polygon", 38], ["Element", 38.5]].map(([n, w]) => (
                <SubRow key={n} $last={n === "Element"}><SubName $on={n === "Edge"}><T w={w}>{n}</T>{n === "Edge" && <EdgeMark on />}</SubName></SubRow>
              ))}
              <StackRow $top><Gap $w={8} /><T w={66}>Editable Poly</T></StackRow>
            </StackList>
            <VScroll><Chev d="u" /><VThumb /><Chev d="d" /></VScroll>
          </Stack>
          <Row $t={5} $h={23} $l={1.5}><Ic n="pin" w={20} /><Gap $w={8} /><VBar /><Gap $w={6} /><ToolBtn><Ic n="tube" w={22} /></ToolBtn><Gap $w={6} /><VBar /><Gap $w={6} /><Ic n="unique" w={21} /><Gap $w={4} /><Ic n="trash" w={20} /><Gap $w={6} /><VBar /><Gap $w={6} /><Ic n="config" w={22} /></Row>
          <Row $t={14} $h={8} $l={5}><Rule /><Gap $w={2} /><Grip $w={14} /><Gap $w={2} /><Rule /></Row>
          <Row $t={4} $a="stretch" $h={526}>
            <div>
              <Roll $w={186} $h={132}>
                <Head tw={82}>Edit Poly Mode</Head>
                <Row $t={5} $h={16} $l={23}><Radio $on /><Gap $w={6} /><T s={11.5} w={28.5}>Model</T><Gap $w={28} /><Radio /><Gap $w={6} /><T s={11.5} w={39}>Animate</T></Row>
                <Row $t={0} $h={18} $l={32}><T s={11.5} w={119}>{"<No Current Operation>"}</T></Row>
                <Row $t={2} $l={58}><B w={65} h={19} tw={36} off>Commit</B></Row>
                <Row $t={5.5} $l={22}><B w={65} h={19} tw={39} off>Settings</B><Gap $w={9} /><B w={65} h={19} tw={32} off>Cancel</B></Row>
                <Row $t={3} $h={16} $l={21}><Chk tw={54}>Show Cage</Chk><Gap $w={36} /><Swatch $w={15} $h={14} $c="#ffc600" /><Gap $w={6} /><Swatch $w={15} $h={14} $c="#e2e494" /></Row>
              </Roll>
              <Gap $h={2} />
              <Roll $w={186} $h={278}>
                <Head tw={52}>Selection</Head>
                <Row $t={3} $h={22} $l={29}><Ic n="svert" w={22} /><Gap $w={2} /><ToolBtn><Ic n="sedge" w={21} /></ToolBtn><Gap $w={3} /><Ic n="sborder" w={20} /><Gap $w={3} /><Ic n="spoly" w={23} /><Gap $w={2} /><Ic n="selem" w={23} /></Row>
                <Row $t={6} $h={16} $l={19}><Chk tw={93}>Use Stack Selection</Chk></Row>
                <Row $t={3} $h={16} $l={19}><Chk tw={47.5}>By Vertex</Chk></Row>
                <Row $t={4} $h={16} $l={19}><Chk tw={86}>Ignore Backfacing</Chk></Row>
                <Row $t={2} $h={17} $l={19}><Chk tw={46} off>By Angle:</Chk><Gap $w={6} /><Field $w={81} $h={16} $bg="#585858" $pr={3}><T s={11.5} w={22} c={OFF}>45,0</T><Spin c="#9a9a9a" /></Field></Row>
                <Row $t={4} $l={16.5}><B w={72} tw={29}>Shrink</B><Gap $w={5} /><B w={72} tw={25}>Grow</B></Row>
                <Row $t={4.5} $l={16.5}><B w={60} tw={21.5}>Ring</B><Gap $w={2} /><Field $w={12} $h={16} $pl={2} $pr={2}><Spin /></Field><Gap $w={3} /><B w={57} tw={24}>Loop</B><Gap $w={1} /><Field $w={12} $h={16} $pl={2} $pr={2}><Spin /></Field></Row>
                <Row $t={4.5} $l={16.5}><B w={149} tw={92}>Get Stack Selection</B></Row>
                <Group $t={10} $l={10.5} $w={159} $h={32}>
                  <Legend><T s={11.5} w={84}>Preview Selection</T></Legend>
                  <Row $t={2.500} $l={1}><Radio $on /><Gap $w={6} /><T s={11.5} w={17}>Off</T><Gap $w={14} /><Radio /><Gap $w={6} /><T s={11.5} w={35}>SubObj</T><Gap $w={9} /><Radio /><Gap $w={6} /><T s={11.5} w={22.5}>Multi</T></Row>
                </Group>
                <Row $t={3.5} $l={82}><T s={11.5} w={82}>0 Edges Selected</T></Row>
              </Roll>
              <Gap $h={2} />
              <Roll $w={186} $h={21}><Head tw={78} open={false}>Soft Selection</Head></Roll>
            </div>
            <Rail $l={2} />
          </Row>
        </ColA>
        <ColB>
          <Roll $w={185} $h={301}>
            <Head tw={57}>Edit Edges</Head>
            <Row $t={5} $l={16}><B w={149} tw={64}>Insert Vertex</B></Row>
            <Pair t={5.5} a="Remove" aw={39} b="Split" bw={20.5} />
            <Pair t={6} a="Extrude" aw={38.5} ao b="Weld" bw={24} bo />
            <Pair t={6} a="Chamfer" aw={41} ao b="Target Weld" bw={59} />
            <Pair t={5} a="Bridge" aw={30} ao b="Connect" bw={41} bo />
            <Row $t={5} $l={16} $a="flex-start"><B w={131} tw={66}>Create Shape</B><Gap $w={4} /><Opt /></Row>
            <Group $t={9} $l={15} $w={153} $h={101}>
              <Legend><T s={11.5} w={76}>Edge Properties</T></Legend>
              <Row $t={2.500} $l={16}><T s={11.5} w={38}>Weight:</T><Gap $w={6} /><Field $w={72} $h={17} $pr={2}><i /><Spin /></Field></Row>
              <Row $t={2} $l={16}><T s={11.5} w={38}>Crease:</T><Gap $w={6} /><Field $w={72} $h={17} $pr={2}><i /><Spin /></Field></Row>
              <Row $t={4} $l={3.500}><B w={69} tw={23}>Hard</B><Gap $w={5} /><B w={69} tw={36}>Smooth</B></Row>
              <Row $t={6} $l={4}><Swatch $w={19} $h={18} $c="#00fa72" /><Gap $w={3} /><Chk tw={92}>Display Hard Edges</Chk></Row>
            </Group>
            <Row $t={5} $l={15.5}><B w={74} tw={36}>Edit Tri.</B><Gap $w={4} /><B w={72} tw={22}>Turn</B></Row>
          </Roll>
          <Roll $w={185} $h={446}>
            <Head tw={81}>Edit Geometry</Head>
            <Row $t={4.5} $l={16}><B w={149} tw={59}>Repeat Last</B></Row>
            <Group $t={6} $l={15} $w={153} $h={49}>
              <Legend><T s={11.5} w={55}>Constraints</T></Legend>
              <Row $t={1} $h={18} $l={8}><Radio $on /><Gap $w={6} /><T s={11.5} w={25}>None</T><Gap $w={17} /><Radio /><Gap $w={6} /><T s={11.5} w={24}>Edge</T></Row>
              <Row $t={0} $h={18} $l={8}><Radio /><Gap $w={6} /><T s={11.5} w={23.5}>Face</T><Gap $w={18.5} /><Radio /><Gap $w={6} /><T s={11.5} w={33.5}>Normal</T></Row>
            </Group>
            <Row $t={7.5} $h={17} $l={27}><Chk tw={65}>Preserve UVs</Chk><Gap $w={14} /><Opt /></Row>
            <Pair t={5} a="Create" aw={33} b="Collapse" bw={40} />
            <Pair t={5} h={16} a="Attach" aw={32} ao b="Detach" bw={34} bo />
            <Group $t={5.5} $l={15} $w={153} $h={75}>
              <Row $t={5} $l={3.500}><B w={69} tw={50}>Slice Plane</B><Gap $w={5} /><Chk tw={21}>Split</Chk></Row>
              <Row $t={4} $l={3.500}><B w={69} tw={21} off>Slice</B><Gap $w={5} /><B w={69} tw={57} off>Reset Plane</B></Row>
              <Row $t={5} $l={3.500}><B w={69} tw={47}>QuickSlice</B><Gap $w={5} /><B w={69} tw={18}>Cut</B></Row>
            </Group>
            <Pair t={4.5} a="MSmooth" aw={44} ao b="Tessellate" bw={48} bo />
            <Row $t={5} $l={16}><B w={86} tw={58}>Make Planar</B><Gap $w={4} /><B w={17} tw={7}>X</B><Gap $w={4} /><B w={17} tw={7}>Y</B><Gap $w={4} /><B w={17} tw={7}>Z</B></Row>
            <Pair t={4} a="View Align" aw={48} b="Grid Align" bw={46} />
            <Row $t={5} $l={54}><B w={57} tw={28}>Relax</B><Gap $w={1} /><Opt /></Row>
            <Pair t={5} a="Hide Selected" aw={66} b="Unhide All" bw={48} off />
            <Row $t={5} $l={45.5}><B w={93} tw={78} off>Hide Unselected</B></Row>
            <Row $t={1.5} $l={19}><T s={11.5} w={88}>Named Selections:</T></Row>
            <Pair t={1.500} a="Copy" aw={25} b="Paste" bw={27} offB />
            <Row $t={5} $l={21}><Chk on tw={114}>Delete Isolated Vertices</Chk></Row>
          </Roll>
          <Roll $w={185} $h={20}><Head tw={103} open={false}>Paint Deformation</Head></Roll>
        </ColB>
        <Rail $l={2}><Thumb /></Rail>
        <Spacer />
        <Rail />
      </PanelBody>
    </Panel>
  );
}

/* ---------- timeline ---------- */
const Time = styled.div`height:52px; flex:none; display:flex; padding-top:5px;`;
const TimeMain = styled.div`flex:1; display:flex; flex-direction:column; margin-left:2px;`;
const TBtn = styled.div`height:16px; width:${(p) => p.$w}px; border-radius:3px; background:#636363; display:flex; align-items:center; justify-content:center; flex:none; margin-right:2px;`;
const TrackRow = styled.div`height:26px; margin-top:5px; border-top:1px solid #0c0c0c; display:flex;`;
const TrackIcon = styled.div`width:51px; display:flex; align-items:center; justify-content:center; padding-right:10px;`;
function Track() {
  const x = (i) => 6.5 + i * 17.968;
  return (
    <svg width="1810" height="25" viewBox="0 0 1810 25">
      <rect width="1810" height="25" fill="#2a2a2a" />
      <rect x="2.500" y="1" width="8" height="23" fill="#857b1f" />
      {Array.from({ length: 101 }, (_, i) => <path key={i} d={`M${Math.floor(x(i)) + 0.5} 0V${i % 5 ? 11 : 25}`} stroke="#7d7d7d" opacity={i ? 1 : 0.4} />)}
      {Array.from({ length: 21 }, (_, i) => (
        <text key={i} x={x(i * 5) - 0.5} y="22" textAnchor="middle" fontFamily="Noto Sans, sans-serif" fontSize="11.500" textLength={String(i * 5).length * 5.6} lengthAdjust="spacingAndGlyphs" fill={i ? "#b4b4b4" : "#d6cc52"}>{i * 5}</text>
      ))}
    </svg>
  );
}

/* ---------- status ---------- */
const Status = styled.div`height:56px; flex:none; display:flex;`;
const ScriptBox = styled.div`width:98px; height:${(p) => p.$h}px; background:${(p) => p.$c}; border:2px solid; border-color:#8c8c8c #eee #eee #8c8c8c; overflow:hidden; padding:1px 0 0 3px;`;
const Col = styled.div`display:flex; flex-direction:column; flex:none; width:${(p) => (p.$w ? p.$w + "px" : "auto")}; padding-top:${(p) => p.$t || 0}px;`;
const BlackBar = styled.div`width:3px; height:52px; margin:2px 4px 0 3px; background:#141414; border-right:1px solid #555;`;
const Slot = styled.div`width:${(p) => p.$w}px; height:${(p) => p.$h || 20}px; flex:none; display:flex; align-items:center; justify-content:center; position:relative;`;
const KeyBtn = styled(Btn)`background:#606060; border-color:#4c4c4c; overflow:visible;`;

function StatusBar() {
  return (
    <Status>
      <Gap $w={4} />
      <Col $t={5}><ScriptBox $h={23} $c="#dcc3c4" /><ScriptBox $h={23} $c="#fff"><T w={91} s={12} c="#8a8a8a" f='"Liberation Mono", monospace'>MAXScript Min</T></ScriptBox></Col>
      <BlackBar />
      <Col $w={907} $t={10}><T w={84}>1 Object Selected</T><Gap $h={9} /><T w={186}>Click or click-and-drag to select objects</T></Col>
      <Col $w={445} $t={7}>
        <Row $h={20}>
          <Slot $w={26}><Ic n="isolate" w={20} /></Slot><Slot $w={28}><Ic n="lock" w={20} /></Slot><Slot $w={26}><Ic n="absol" w={20} /></Slot>
          <Gap $w={2} /><T w={10}>X:</T><Gap $w={3} /><Field $w={58} $h={19} $bg="#585858"><T w={44} c={OFF}>-6130,22</T></Field>
          <Gap $w={13} /><T w={10}>Y:</T><Gap $w={3} /><Field $w={58} $h={19} $bg="#585858"><T w={19} c={OFF}>-0,0</T></Field>
          <Gap $w={13} /><T w={10}>Z:</T><Gap $w={3.500} /><Field $w={58} $h={19} $bg="#585858"><T w={34} c={OFF}>33,992</T></Field>
          <Gap $w={14.500} /><T w={49}>Grid = 0,0</T>
        </Row>
        <Row $t={4} $l={310}><ToolBtn><Ic n="cube" w={20} /></ToolBtn><Gap $w={4} /><T w={65}>Add Time Tag</T></Row>
      </Col>
      <Col $w={131} $t={7}>
        <Row $h={20}><Slot $w={24}><Ic n="start" w={22} /></Slot><VBar /><Slot $w={25}><Ic n="prev" w={22} /></Slot><Slot $w={20}><Ic n="play" w={22} /><Fly /></Slot><Slot $w={25}><Ic n="next" w={22} /></Slot><VBar /><Slot $w={24}><Ic n="end" w={22} /></Slot></Row>
        <Row $t={3} $h={20}><Slot $w={24}><Ic n="keymode" w={20} /></Slot><Gap $w={2} /><Field $w={71} $h={19} $pr={3} $bd="#222"><T w={6}>0</T><Spin /></Field><Slot $w={26}><Ic n="timecfg" w={21} /></Slot></Row>
      </Col>
      <Row $a="flex-start" $h={56}>
        <Col $t={7}><KeyBtn $w={43} $h={43}><Ic n="bigkey" w={25} /></KeyBtn></Col>
        <Gap $w={5} />
        <Col $t={7}><KeyBtn $w={47} $h={21}><T w={44} c="#d8d8d8">Auto Key</T></KeyBtn><Gap $h={1} /><KeyBtn $w={47} $h={21}><T w={38} c="#d8d8d8">Set Key</T></KeyBtn></Col>
        <Gap $w={4} />
        <Col $t={7}>
          <Field $w={115} $h={20} $pl={5} $pr={6}><T w={41} c="#dcdcdc">Selected</T><Tri w={6} h={6} /></Field>
          <Row $t={3}><Slot $w={24}><Ic n="tangent" w={22} /><Fly /></Slot><Gap $w={2} /><KeyBtn $w={89} $h={21}><T w={62} c="#d8d8d8">Key Filters...</T></KeyBtn></Row>
        </Col>
        <Gap $w={8} />
        <Col $t={7}>
          <Row $h={20}>{["zoom", "zoomall", "extents^", "extall^"].map((n) => <Slot key={n} $w={23.3}><Ic n={n.replace("^", "")} w={21} />{n.endsWith("^") && <Fly />}</Slot>)}</Row>
          <Row $t={3} $h={20}>{["region", "hand^", "orbit^", "maxi"].map((n) => <Slot key={n} $w={23.3}><Ic n={n.replace("^", "")} w={21} />{n.endsWith("^") && <Fly />}</Slot>)}</Row>
        </Col>
      </Row>
    </Status>
  );
}

/* ---------- task bar ---------- */
const Task = styled.div`height:40px; flex:none; display:flex; align-items:stretch; background:linear-gradient(90deg,#1f1403 0,#251302 880px,#1c1309 1060px,#22201e 1061px,#262220 1690px,#2a1e08 1740px,#241803 1920px);`;
const Search = styled.div`width:344px; background:#f2f2f2; border-top:1px solid #bdbdbd; display:flex; align-items:center; padding:0 9px 0 9px;`;
const Ring = styled.div`width:22px; height:20px; border:3px solid #111; border-radius:50%; margin-right:9px;`;
const TApp = styled.div`width:49px; display:flex; align-items:center; justify-content:center; border-bottom:2px solid ${(p) => (p.$run ? "#a9a2ef" : "transparent")}; padding-top:2px;
  ${(p) => p.$run && !p.$on && css`width:41px; margin:0 4px;`} ${(p) => p.$on && css`background:#504234;`}`;
const Adobe = styled.div`width:22px; height:21px; border:2px solid ${(p) => p.$c}; background:${(p) => p.$bg}; display:flex; align-items:center; justify-content:center;`;
const Tile = styled.div`width:24px; height:24px; background:${(p) => p.$bg}; display:flex; align-items:center; justify-content:center;`;
const ClockBox = styled.div`width:62px; display:flex; flex-direction:column; align-items:center; padding-top:3px; gap:2px;`;
const ShowDesk = styled.div`width:5px; border-left:1px solid #8b8478; margin-left:9px;`;

function TaskBar() {
  return (
    <Task>
      <Slot $w={48} $h={40}><Ic n="win" w={24} /></Slot>
      <Search><Ring /><T w={210} s={15.5} c="#333">Scrivi qui per eseguire la ricerca</T><Spacer /><Ic n="mic" w={24} /></Search>
      <TApp><Ic n="taskview" w={24} /></TApp><Gap $w={1} />
      <TApp><Ic n="folder" w={23} /></TApp>
      <TApp><Ic n="mail" w={24} h={22} /></TApp>
      <TApp $run><Ic n="chrome" w={23} /></TApp>
      <TApp><Tile $bg="#f4e2de"><T b w={17} s={22} c="#bf2026">A</T></Tile></TApp>
      <TApp $run $on><Tile $bg="#e2efef"><T b w={12} s={20} c="#10888c">3</T></Tile></TApp>
      <TApp><Ic n="sketch" w={21} h={22} /></TApp>
      <TApp><Ic n="cc" w={23} h={22} /></TApp>
      <TApp><Adobe $c="#ee3d8d" $bg="#2e0618"><T b w={11} s={12} c="#ee3d8d">Id</T></Adobe></TApp>
      <TApp><Adobe $c="#00b4ea" $bg="#041c26"><T b w={12} s={12} c="#00b4ea">Ps</T></Adobe></TApp>
      <TApp><Adobe $c="#f37c0c" $bg="#261202"><T b w={11} s={12} c="#f37c0c">Ai</T></Adobe></TApp>
      <TApp><Ic n="snip" w={24} /></TApp>
      <TApp $run><Ic n="github" w={24} /></TApp>
      <TApp $run><Ic n="spotify" w={24} /></TApp>
      <Spacer />
      <Slot $w={50} $h={40}><Ic n="people" w={22} /></Slot>
      <Slot $w={23} $h={40}><Ic n="up" w={24} /></Slot>
      <Slot $w={24} $h={40}><Ic n="cloud" w={19} /></Slot>
      <Slot $w={24} $h={40}><Ic n="net" w={23} /></Slot>
      <Slot $w={24} $h={40}><Ic n="vol" w={22} /></Slot>
      <Gap $w={4} />
      <ClockBox><T w={26} c="#fff">11:26</T><T w={58} c="#fff">07/02/2018</T></ClockBox>
      <Gap $w={13} />
      <Slot $w={24} $h={40}><Ic n="notif" w={22} /></Slot>
      <Gap $w={7} />
      <ShowDesk />
    </Task>
  );
}

export default function App() {
  return (
    <Shell>
      <Global />
      <TitleBar>
        <T b w={11} s={15} c="#1a8f95">3</T><Gap $w={10} /><T w={287} c="#000">102282.max - Autodesk 3ds Max 2018 - Student Version</T><Spacer />
        <WinBtn><svg width="10" height="10"><path d="M0 5.500H10" stroke="#000" /></svg></WinBtn>
        <WinBtn><svg width="10" height="10"><path d="M.5 2.500H7.500V9.500H.5Z M2.500 2V.5H9.500V7.500H8" fill="none" stroke="#000" /></svg></WinBtn>
        <WinBtn><svg width="11" height="11"><path d="M.5 .5L10.500 10.500M10.500 .5L.5 10.500" stroke="#000" /></svg></WinBtn>
      </TitleBar>
      <MenuBar>
        <MenuList>{MENUS.map(([n, w]) => <T key={n} w={w} c="#f0f0f0">{n}</T>)}</MenuList>
        <Spacer />
        <User>
          <svg width="16" height="16" viewBox="0 0 16 16"><path d="M8 1C13 1 12 7 10 9V11L15.500 14V15.500H.5V14L6 11V9C4 7 3 1 8 1Z" fill="#5c86dd" stroke="#1d3570" /></svg>
          <T w={78} c="#111" f='"Liberation Sans", sans-serif' s={12.5}>Clara Maros...</T><Tri w={10} h={6} c="#000" />
        </User>
        <T w={61} c="#d0d0d0">Workspaces:</T><Gap $w={4} />
        <Field $w={136} $h={20}><T w={36} c="#dcdcdc">Default</T><Tri w={6} h={5} /></Field>
      </MenuBar>
      <Toolbar><Grip $v={26} /><Gap $w={2} />{TOOLS.map((n, i) => <Tool key={i} n={n} />)}</Toolbar>
      <RibbonTabs>
        <RTab $on><T w={50.5}>Modeling</T></RTab><Gap $w={23} />
        <RTab><T w={48} c="#a2a2a2">Freeform</T></RTab><Gap $w={44} />
        <RTab><T w={48} c="#a2a2a2">Selection</T></RTab><Gap $w={44} />
        <RTab><T w={65} c="#a2a2a2">Object Paint</T></RTab><Gap $w={44} />
        <RTab><T w={47} c="#a2a2a2">Populate</T></RTab><Gap $w={32} />
        <RTab><Pill><Tri w={6} h={4} c="#222" /></Pill><Gap $w={4} /><Tri w={5} h={4} /></RTab>
      </RibbonTabs>
      <RibbonRow>{RPANELS.map(([n, w, tw]) => <RBtn key={n} $w={w}><T w={tw}>{n}</T></RBtn>)}</RibbonRow>
      <Main><LeftDock /><Viewport /><CommandPanel /></Main>
      <Time>
        <Gap $w={2} /><Grip $v={45} />
        <TimeMain>
          <Row $l={1}><TBtn $w={14}><T w={7}>{"<"}</T></TBtn><TBtn $w={123}><T w={34} c="#dcdcdc">0 / 100</T></TBtn><TBtn $w={14}><T w={7}>{">"}</T></TBtn></Row>
          <TrackRow>
            <TrackIcon><svg width="15" height="12" viewBox="0 0 15 12"><path d="M1.500 0V11" stroke="#ccc" strokeWidth="3" strokeDasharray="1 1.500" /><path d="M5 8C7 -4 9 0 10 6S13 12 14 5" fill="none" stroke={C} strokeWidth="1.400" /></svg></TrackIcon>
            <Track />
          </TrackRow>
        </TimeMain>
      </Time>
      <StatusBar />
      <TaskBar />
    </Shell>
  );
}
